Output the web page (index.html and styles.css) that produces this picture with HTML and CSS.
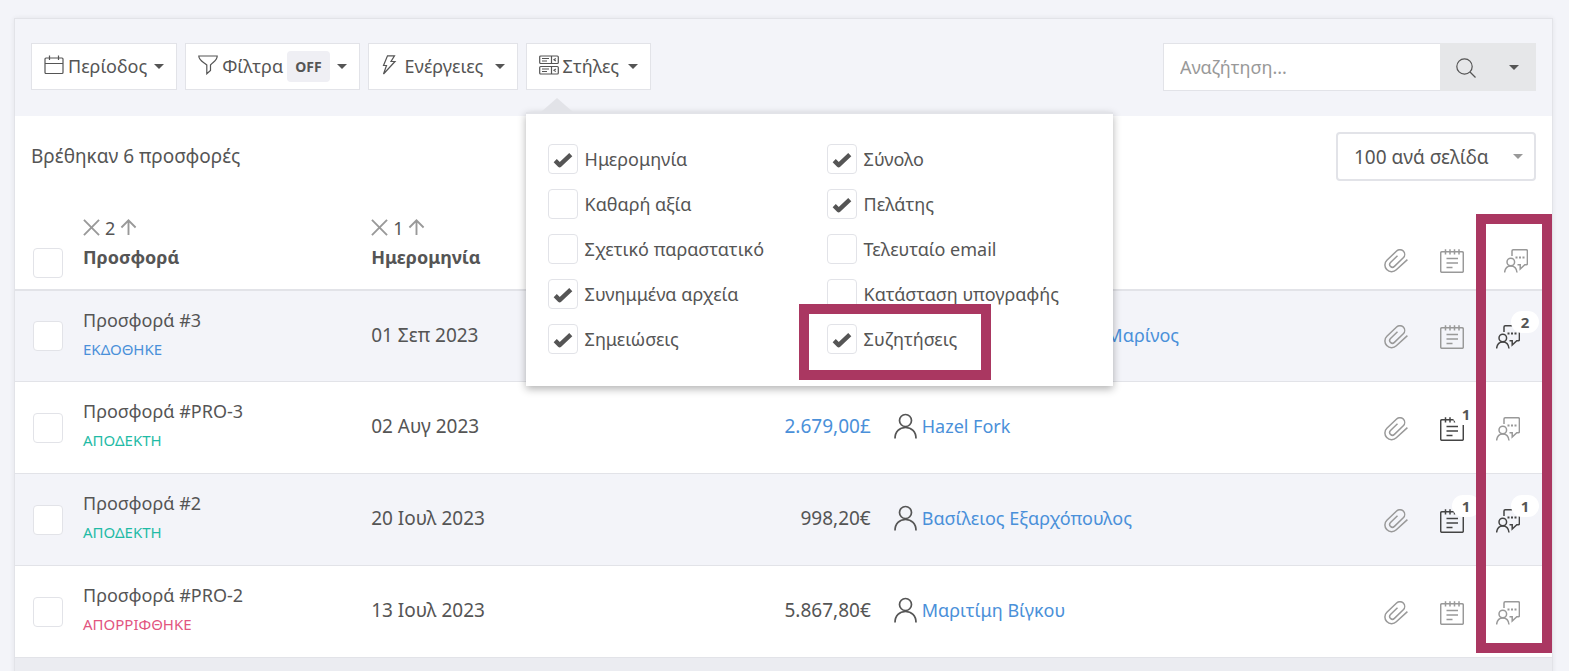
FILE: index.html
```html
<!DOCTYPE html>
<html lang="el">
<head>
<meta charset="utf-8">
<title>Προσφορές</title>
<link rel="stylesheet" href="styles.css">
</head>
<body>
<svg class="sprite" aria-hidden="true">
  <symbol id="clip" viewBox="0 0 24 24"><path d="M23.4 10.6 12.3 20.8a6.600 6.600 0 0 1-9.500-.2 6.500 6.500 0 0 1 .1-9.300L12.600 2a4.700 4.700 0 0 1 6.700.1 4.700 4.700 0 0 1 0 6.600l-8.900 8.700a2.800 2.800 0 0 1-3.900 0 2.800 2.800 0 0 1 0-3.900l7-6.800"/></symbol>
  <symbol id="note" viewBox="0 0 24 24"><path d="M4.500 2.800H2A1.300 1.300 0 0 0 .7 4.100V22A1.300 1.300 0 0 0 2 23.300H22A1.300 1.300 0 0 0 23.300 22V4.100A1.300 1.300 0 0 0 22 2.800H20.500M4.500 2.800H20.500M5.500 .3V5.500M10 .3V5.500M14.500 .3V5.500M19 .3V5.500M6.500 9.500H18M6.500 14H18M6.500 18.500H12.500"/></symbol>
  <symbol id="chat" viewBox="0 0 24 24"><path d="M8 7V2A1.200 1.200 0 0 1 9.200 .8H22.300A1.200 1.200 0 0 1 23.400 2V14.600A1.200 1.200 0 0 1 22.300 15.800H20.800L16.200 20V15.800H13.500"/><circle cx="6.800" cy="13" r="3.800"/><path d="M.6 23.500C1 19.500 3.200 16.900 6.800 16.900S12.600 19.500 13 23.500"/><path d="M11.500 8.500H13.500M15 8.500H17M18.500 8.500H20.500" stroke-width="2"/></symbol>
  <symbol id="user" viewBox="0 0 24 26"><circle cx="11.500" cy="7.500" r="6"/><path d="M1 25.500C1 18.500 5.500 14.500 11.500 14.500S22 18.500 22 25.500"/></symbol>
  <symbol id="cross" viewBox="0 0 18 18"><path d="M1 1 17 17M17 1 1 17"/></symbol>
  <symbol id="up" viewBox="0 0 18 18"><path d="M9 17V1.500M1.500 9 9 1.500 16.500 9"/></symbol>
</svg>
<main class="card">
  <div class="toolbar">
    <div class="actions">
      <button class="btn" type="button">
        <svg class="icon-btn" viewBox="0 0 20 20"><rect x="1" y="3" width="18" height="15.500" rx="1"/><path d="M1 8.500H19M5.500 .5V5M14.500 .5V5"/></svg>
        <span>Περίοδος</span><i class="caret"></i>
      </button>
      <button class="btn" type="button">
        <svg class="icon-btn" viewBox="0 0 20 20"><path d="M.8 1H19.200C19.200 5.500 15 7 12.500 10V15.500L8.800 18.800V10C5.500 7 .8 5.500 .8 1Z"/></svg>
        <span>Φίλτρα</span><b class="off">OFF</b><i class="caret"></i>
      </button>
      <button class="btn wide" type="button">
        <svg class="icon-btn" viewBox="0 0 20 20"><path d="M6.500 .8H13.500L10 6.500H14L2.500 19 5.500 10.500H2.500Z"/></svg>
        <span>Ενέργειες</span><i class="caret"></i>
      </button>
      <div class="dropdown">
        <button class="btn styles" type="button" aria-expanded="true">
          <svg class="icon-btn" viewBox="0 0 20 20"><rect x=".7" y="1" width="18.600" height="7.500" rx="1"/><rect x=".7" y="11.500" width="18.600" height="7.500" rx="1"/><path d="M12.500 1V8.500M12.500 11.500V19M3 3.500H10M3 6H8M3 14H10M3 16.500H8M16.800 3.500 15 4.800 16.800 6M16.800 14 15 15.300 16.800 16.500"/></svg>
          <span>Στήλες</span><i class="caret"></i>
        </button>
        <div class="panel">
          <div class="options">
            <label class="option"><input class="check" type="checkbox" checked>Ημερομηνία</label>
            <label class="option"><input class="check" type="checkbox">Καθαρή αξία</label>
            <label class="option"><input class="check" type="checkbox">Σχετικό παραστατικό</label>
            <label class="option"><input class="check" type="checkbox" checked>Συνημμένα αρχεία</label>
            <label class="option"><input class="check" type="checkbox" checked>Σημειώσεις</label>
          </div>
          <div class="options">
            <label class="option"><input class="check" type="checkbox" checked>Σύνολο</label>
            <label class="option"><input class="check" type="checkbox" checked>Πελάτης</label>
            <label class="option"><input class="check" type="checkbox">Τελευταίο email</label>
            <label class="option"><input class="check" type="checkbox">Κατάσταση υπογραφής</label>
            <label class="option marked"><input class="check" type="checkbox" checked>Συζητήσεις</label>
          </div>
        </div>
      </div>
    </div>
    <form class="search">
      <input class="search-input" type="text" placeholder="Αναζήτηση..." aria-label="Αναζήτηση">
      <button class="search-btn" type="button" aria-label="Αναζήτηση"><svg class="icon-btn" viewBox="0 0 20 20"><circle cx="8.500" cy="8.500" r="7.700"/><path d="M14 14 19.500 19.500"/></svg></button>
      <button class="search-btn narrow" type="button" aria-label="Επιλογές"><i class="caret"></i></button>
    </form>
  </div>
  <div class="summary">
    <p class="found">Βρέθηκαν 6 προσφορές</p>
    <div class="select-wrap">
      <select class="page-size" aria-label="Ανά σελίδα"><option>100 ανά σελίδα</option></select>
      <i class="caret light"></i>
    </div>
  </div>
  <div class="table-wrap">
    <table class="offers">
      <colgroup><col class="c-check"><col class="c-name"><col class="c-date"><col class="c-total"><col class="c-client"><col class="c-icon"><col class="c-icon"><col class="c-chat"></colgroup>
      <thead>
        <tr>
          <th class="pick"><input class="check" type="checkbox" aria-label="Επιλογή όλων"></th>
          <th><div class="sort"><svg class="icon-sort"><use href="#cross"/></svg>2<svg class="icon-sort"><use href="#up"/></svg></div>Προσφορά</th>
          <th><div class="sort"><svg class="icon-sort"><use href="#cross"/></svg>1<svg class="icon-sort"><use href="#up"/></svg></div>Ημερομηνία</th>
          <th></th>
          <th></th>
          <th class="ic"><svg class="icon"><use href="#clip"/></svg></th>
          <th class="ic"><svg class="icon"><use href="#note"/></svg></th>
          <th class="ic"><svg class="icon"><use href="#chat"/></svg></th>
        </tr>
      </thead>
      <tbody>
        <tr>
          <td class="pick"><input class="check" type="checkbox" aria-label="Προσφορά #3"></td>
          <td>Προσφορά #3<div class="status issued">ΕΚΔΟΘΗΚΕ</div></td>
          <td class="date">01 Σεπ 2023</td>
          <td class="total"></td>
          <td><div class="client"><svg class="icon-user"><use href="#user"/></svg><a href="#">Κωνσταντίνος Αλέξης Μαρίνος</a></div></td>
          <td class="ic"><svg class="icon"><use href="#clip"/></svg></td>
          <td class="ic"><svg class="icon"><use href="#note"/></svg></td>
          <td class="talk"><span class="mark on"><svg class="icon"><use href="#chat"/></svg><b class="count">2</b></span></td>
        </tr>
        <tr>
          <td class="pick"><input class="check" type="checkbox" aria-label="Προσφορά #PRO-3"></td>
          <td>Προσφορά #PRO-3<div class="status accepted">ΑΠΟΔΕΚΤΗ</div></td>
          <td class="date">02 Αυγ 2023</td>
          <td class="total"><a href="#">2.679,00£</a></td>
          <td><div class="client"><svg class="icon-user"><use href="#user"/></svg><a href="#">Hazel Fork</a></div></td>
          <td class="ic"><svg class="icon"><use href="#clip"/></svg></td>
          <td class="ic"><span class="mark on"><svg class="icon"><use href="#note"/></svg><b class="count">1</b></span></td>
          <td class="talk"><svg class="icon"><use href="#chat"/></svg></td>
        </tr>
        <tr>
          <td class="pick"><input class="check" type="checkbox" aria-label="Προσφορά #2"></td>
          <td>Προσφορά #2<div class="status accepted">ΑΠΟΔΕΚΤΗ</div></td>
          <td class="date">20 Ιουλ 2023</td>
          <td class="total">998,20€</td>
          <td><div class="client"><svg class="icon-user"><use href="#user"/></svg><a href="#">Βασίλειος Εξαρχόπουλος</a></div></td>
          <td class="ic"><svg class="icon"><use href="#clip"/></svg></td>
          <td class="ic"><span class="mark on"><svg class="icon"><use href="#note"/></svg><b class="count">1</b></span></td>
          <td class="talk"><span class="mark on"><svg class="icon"><use href="#chat"/></svg><b class="count">1</b></span></td>
        </tr>
        <tr>
          <td class="pick"><input class="check" type="checkbox" aria-label="Προσφορά #PRO-2"></td>
          <td>Προσφορά #PRO-2<div class="status rejected">ΑΠΟΡΡΙΦΘΗΚΕ</div></td>
          <td class="date">13 Ιουλ 2023</td>
          <td class="total">5.867,80€</td>
          <td><div class="client"><svg class="icon-user"><use href="#user"/></svg><a href="#">Μαριτίμη Βίγκου</a></div></td>
          <td class="ic"><svg class="icon"><use href="#clip"/></svg></td>
          <td class="ic"><svg class="icon"><use href="#note"/></svg></td>
          <td class="talk"><svg class="icon"><use href="#chat"/></svg></td>
        </tr>
      </tbody>
    </table>
    <div class="column-mark"></div>
  </div>
  <div class="footer"></div>
</main>
</body>
</html>
```
FILE: styles.css
```css
*, *::before, *::after { box-sizing: border-box; }
html { height: 100%; overflow: hidden; }
body {
  margin: 0;
  padding: 18px 16px 0 14px;
  background: #f3f4f9;
  color: #555;
  font: 18px/28px "Noto Sans", "Open Sans", sans-serif;
}
button, input, select { font: inherit; color: inherit; }
a { color: #4a90d9; text-decoration: none; }
svg { fill: none; stroke: currentColor; flex: none; }
.sprite { position: absolute; width: 0; height: 0; }

.card {
  border: 1px solid #e2e3e8;
  background: #fff;
  box-shadow: 0 0 5px rgba(0, 0, 0, .07);
}

.toolbar {
  display: flex;
  justify-content: space-between;
  padding: 24px 16px 25px;
  background: #f3f4f9;
}
.actions { display: flex; gap: 8px; height: 47px; }
.btn {
  display: flex;
  align-items: center;
  gap: 4px;
  height: 47px;
  padding: 0 12px 2px;
  border: 1px solid #e2e3e8;
  background: #fff;
}
.wide { min-width: 150px; }
.styles { min-width: 125px; }
.icon-btn { width: 20px; height: 20px; stroke-width: 1.2; margin-bottom: 2px; }
.caret {
  border: 5px solid transparent;
  border-top-color: #555;
  border-bottom: 0;
  margin: 2px 0 0 3px;
}
.wide .caret, .styles .caret { margin-left: auto; }
.caret.light { border-top-color: #999; }
.off {
  height: 31px;
  margin-top: 2px;
  padding: 2px 8px 0;
  border-radius: 4px;
  background: #efeff4;
  font-size: 14px;
}
.dropdown { position: relative; }
.panel {
  position: absolute;
  z-index: 2;
  top: 69px;
  left: 0;
  display: grid;
  grid-template-columns: 279px 1fr;
  width: 587px;
  padding: 22px 22px 25px;
  border-top: 2px solid #e2e3e8;
  background: #fff;
  box-shadow: 0 3px 8px rgba(0, 0, 0, .3);
}
.panel::before {
  content: "";
  position: absolute;
  top: -16px;
  left: 15px;
  border: 16px solid transparent;
  border-top: 0;
  border-bottom: 14px solid #e2e3e8;
}
.option {
  position: relative;
  display: flex;
  align-items: center;
  gap: 7px;
  height: 45px;
}
.marked::after {
  content: "";
  position: absolute;
  top: -12px;
  left: -28px;
  width: 192px;
  height: 76px;
  border: 10px solid #aa3761;
}
.check {
  appearance: none;
  flex: none;
  width: 30px;
  height: 30px;
  margin: 0;
  border: 1px solid #e2e3e8;
  border-radius: 4px;
  background: #fff center / 20px 18px no-repeat;
}
.check:checked {
  background-image: url("data:image/svg+xml,%3Csvg xmlns='http://www.w3.org/2000/svg' viewBox='0 0 18 16'%3E%3Cpath d='M2 9.500 6 13.500 16 4' fill='none' stroke='%23555' stroke-width='4' stroke-linejoin='round'/%3E%3C/svg%3E");
}

.search { display: flex; width: 373px; height: 48px; }
.search-input {
  flex: 1;
  min-width: 0;
  padding: 0 16px;
  border: 1px solid #e2e3e8;
  border-right: 0;
  background: #fff;
}
.search-input::placeholder { color: #999; }
.search-btn {
  display: flex;
  align-items: center;
  justify-content: center;
  width: 52px;
  padding: 0;
  border: 0;
  background: #e6e7e9;
}
.search-btn .icon-btn { margin: 2px 0 0; }
.search-btn.narrow { width: 44px; }
.search-btn .caret { margin: 0; }

.summary {
  display: flex;
  justify-content: space-between;
  padding: 16px 16px 0;
}
.found { margin: 10px 0 0; font-size: 19px; }
.select-wrap { position: relative; }
.page-size {
  appearance: none;
  width: 200px;
  height: 49px;
  padding: 0 16px;
  border: 2px solid #e2e3e8;
  border-radius: 4px;
  background: #fff;
  font-size: 19px;
}
.select-wrap .caret { position: absolute; right: 13px; top: 20px; }

.table-wrap { position: relative; padding-top: 16px; }
.offers { width: 100%; table-layout: fixed; border-collapse: separate; border-spacing: 0; }
.c-check { width: 52px; }
.c-name { width: 18.75%; }
.c-date { width: 17%; }
.c-total { width: 17%; }
.c-icon { width: 56px; }
.c-chat { width: 72px; }
th, td { padding: 0 0 0 16px; text-align: left; white-space: nowrap; }
th {
  height: 94px;
  padding-top: 15px;
  border-bottom: 2px solid #e2e3e8;
  vertical-align: top;
}
td { height: 92px; padding-bottom: 3px; border-bottom: 1px solid #e2e3e8; }
tbody tr:first-child td { height: 91px; }
tbody tr:nth-child(odd) { background: #f3f4f9; }
.offers .pick { padding-left: 18px; }
td.pick { padding-bottom: 0; }
.pick .check { display: block; }
th.pick, th.ic { vertical-align: bottom; padding-bottom: 11px; }
.sort { display: flex; align-items: center; gap: 5px; height: 31px; font-weight: 400; }
.icon-sort { width: 17px; height: 17px; color: #999; stroke-width: 2; }
.status { font-size: 15px; line-height: 30px; }
.issued { color: #4a90d9; }
.accepted { color: #1fbba6; }
.rejected { color: #e2557f; }
.date, .total { font-size: 19px; }
.offers .total { padding-right: 7px; text-align: right; }
.client { display: flex; align-items: center; gap: 4px; }
.icon-user { width: 24px; height: 26px; stroke-width: 1.7; }
.offers .ic { padding-left: 0; text-align: center; }
.icon { display: block; width: 24px; height: 24px; margin: 0 auto; color: #999; stroke-width: 1.5; }
th .icon { margin-bottom: 5px; }
td .icon { margin-top: 5px; }
.talk .icon { margin-left: 0; }
.mark { position: relative; display: block; width: 24px; margin: 0 auto; }
.talk .mark { margin-left: 0; }
.mark.on .icon { color: #444; }
.count {
  position: absolute;
  top: -14px;
  left: 12px;
  width: 28px;
  border-radius: 12px;
  background: #fff;
  font-size: 15px;
  line-height: 22px;
  text-align: center;
}
.talk .count { left: 15px; }
.column-mark {
  position: absolute;
  top: 33px;
  right: 0;
  bottom: 5px;
  width: 76px;
  border: 10px solid #aa3761;
  pointer-events: none;
}
.footer { height: 40px; background: #ebecf1; }
```
